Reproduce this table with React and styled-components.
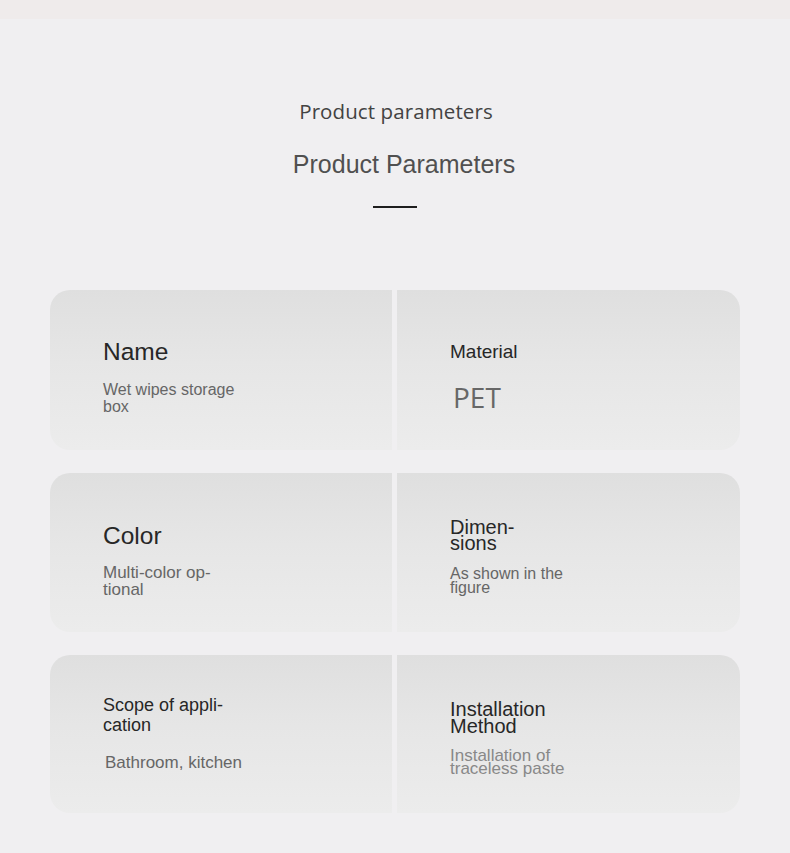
import React from "react";
import styled, { createGlobalStyle } from "styled-components";

const Global = createGlobalStyle`
  html, body { margin: 0; padding: 0; background: #f0eff1; }
  body { font-family: "Liberation Sans", Arial, sans-serif; }
`;

const Page = styled.div`
  width: 790px;
  min-height: 853px;
  background: #f0eff1;
  display: flex;
  flex-direction: column;
`;

const TopBand = styled.div`
  height: 19px;
  background: #efebeb;
`;

const Header = styled.header`
  display: flex;
  flex-direction: column;
  align-items: center;
  padding-top: 78px;
`;

const Kicker = styled.h2`
  margin: 0;
  font-family: "Open Sans", "Noto Sans", sans-serif;
  font-weight: 500;
  font-size: 20.5px;
  line-height: 28px;
  color: #434343;
  letter-spacing: 0.1px;
  transform: translateX(1px);
`;

const Title = styled.h1`
  margin: 25px 0 0;
  font-family: "Liberation Sans", Arial, sans-serif;
  font-weight: 400;
  font-size: 25px;
  line-height: 28px;
  color: #505050;
  transform: translateX(9px);
`;

const Rule = styled.div`
  width: 44px;
  height: 2px;
  background: #1e1e1e;
  margin-top: 28px;
`;

const Rows = styled.div`
  display: flex;
  flex-direction: column;
  gap: 23px;
  margin: 82px 50px 0;
`;

const Row = styled.div`
  display: grid;
  grid-template-columns: 342px 343px;
  column-gap: 5px;
  height: ${(p) => p.$h}px;
`;

const Cell = styled.div`
  background: linear-gradient(180deg, #dfdfdf 0%, #e6e6e6 45%, #ececec 100%);
  border-radius: ${(p) => (p.$side === "left" ? "20px 0 0 20px" : "0 20px 20px 0")};
  display: flex;
  flex-direction: column;
  justify-content: flex-start;
  padding-left: 53px;
  padding-top: ${(p) => p.$pt}px;
  box-sizing: border-box;
`;

const Label = styled.div`
  font-size: ${(p) => p.$size}px;
  line-height: ${(p) => p.$lh}px;
  color: #272727;
`;

const Value = styled.div`
  margin-top: ${(p) => p.$mt}px;
  margin-left: ${(p) => p.$ml || 0}px;
  font-size: ${(p) => p.$size || 16}px;
  line-height: ${(p) => p.$lh || 17}px;
  color: ${(p) => p.$color || "#666"};
`;

const BigValue = styled.div`
  margin-top: ${(p) => p.$mt}px;
  margin-left: 3px;
  font-family: "Open Sans", "Noto Sans", sans-serif;
  font-weight: 400;
  font-size: 28px;
  line-height: 30px;
  color: #676767;
`;

export default function App() {
  return (
    <>
      <Global />
      <Page>
        <TopBand />
        <Header>
          <Kicker>Product parameters</Kicker>
          <Title>Product Parameters</Title>
          <Rule />
        </Header>
        <Rows>
          <Row $h={160}>
            <Cell $side="left" $pt={48}>
              <Label $size={24.5} $lh={28}>Name</Label>
              <Value $mt={15}>Wet wipes storage<br />box</Value>
            </Cell>
            <Cell $side="right" $pt={51}>
              <Label $size={19} $lh={22}>Material</Label>
              <BigValue $mt={19}>PET</BigValue>
            </Cell>
          </Row>
          <Row $h={159}>
            <Cell $side="left" $pt={49}>
              <Label $size={24.5} $lh={28}>Color</Label>
              <Value $mt={14} $size={17}>Multi-color op-<br />tional</Value>
            </Cell>
            <Cell $side="right" $pt={46}>
              <Label $size={20} $lh={16}>Dimen-<br />sions</Label>
              <Value $mt={16} $lh={14}>As shown in the<br />figure</Value>
            </Cell>
          </Row>
          <Row $h={158}>
            <Cell $side="left" $pt={40}>
              <Label $size={18} $lh={20}>Scope of appli-<br />cation</Label>
              <Value $mt={19} $ml={2} $size={17}>Bathroom, kitchen</Value>
            </Cell>
            <Cell $side="right" $pt={46}>
              <Label $size={20} $lh={17}>Installation<br />Method</Label>
              <Value $mt={14} $lh={13} $size={17} $color="#888">Installation of<br />traceless paste</Value>
            </Cell>
          </Row>
        </Rows>
      </Page>
    </>
  );
}
